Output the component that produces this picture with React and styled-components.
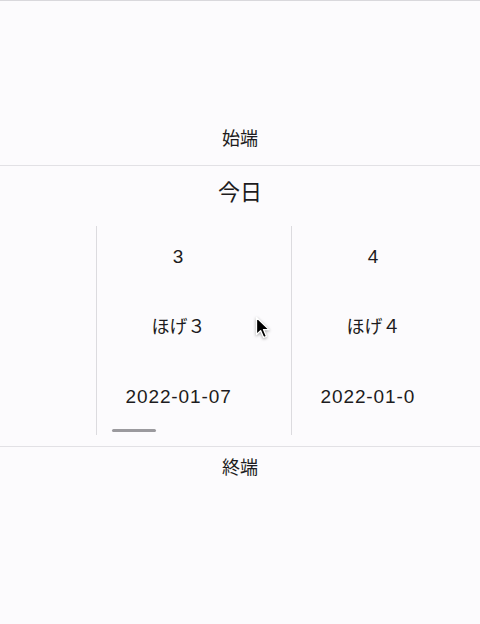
import React from "react";
import styled, { createGlobalStyle } from "styled-components";

const GlobalStyle = createGlobalStyle`
  body {
    margin: 0;
    background: #fcfbfd;
    font-family: "Liberation Sans", "Noto Sans CJK JP", sans-serif;
    color: #1d1b20;
  }
`;

const Page = styled.div`
  position: relative;
  width: 480px;
  height: 624px;
  box-sizing: border-box;
  border-top: 1px solid #d9d8dc;
  background: #fcfbfd;
  display: flex;
  flex-direction: column;
  overflow: hidden;
`;

const EdgeLabel = styled.div`
  box-sizing: border-box;
  display: flex;
  justify-content: center;
  font-size: 18px;
  line-height: 24px;
  ${(p) =>
    p.top
      ? `
    height: 165px;
    align-items: flex-end;
    padding-bottom: 14px;
    border-bottom: 1px solid #e2e1e5;
  `
      : `
    padding-top: 9px;
    border-top: 1px solid #e2e1e5;
  `}
`;

const Title = styled.div`
  margin-top: 12px;
  text-align: center;
  font-size: 22px;
  line-height: 30px;
`;

const Viewport = styled.div`
  position: relative;
  margin: 18px 0 11px 96px;
  width: 321px;
  height: 209px;
  display: flex;
  overflow: hidden;
`;

const Column = styled.div`
  flex: 0 0 195px;
  box-sizing: border-box;
  border-left: 1px solid #dcdbdf;
  padding: 19px 31px 0 0;
  display: flex;
  flex-direction: column;
  align-items: center;
  gap: 46px;
`;

const Cell = styled.div`
  font-size: 19px;
  line-height: 24px;
  letter-spacing: 0.9px;
  white-space: nowrap;
`;

const Label = styled(Cell)`
  font-size: 18px;
  letter-spacing: 0;
`;

const DateCell = styled(Cell)`
  width: 106px;
  overflow: hidden;
`;

const Thumb = styled.div`
  position: absolute;
  left: 16px;
  bottom: 3px;
  width: 44px;
  height: 3px;
  border-radius: 2px;
  background: #9b9a9e;
`;

const Cursor = styled.svg`
  position: absolute;
  left: 255px;
  top: 315px;
  width: 16px;
  height: 24px;
  filter: drop-shadow(0 1px 1.5px rgba(0, 0, 0, 0.35));
`;

const items = [
  { id: "3", name: "ほげ３", date: "2022-01-07" },
  { id: "4", name: "ほげ４", date: "2022-01-0" },
];

export default function App() {
  return (
    <>
      <GlobalStyle />
      <Page>
        <EdgeLabel top>始端</EdgeLabel>
        <Title>今日</Title>
        <Viewport>
          {items.map((item) => (
            <Column key={item.id}>
              <Cell>{item.id}</Cell>
              <Label>{item.name}</Label>
              <DateCell>{item.date}</DateCell>
            </Column>
          ))}
          <Thumb />
        </Viewport>
        <EdgeLabel>終端</EdgeLabel>
        {/* mouse pointer */}
        <Cursor viewBox="0 0 16 24">
          <path
            d="M1.5 1.5 L1.5 18.5 L5.6 14.6 L8.6 21.5 L11.4 20.3 L8.5 13.6 L14 13.6 Z"
            fill="#000"
            stroke="#fff"
            strokeWidth="1.3"
            strokeLinejoin="round"
          />
        </Cursor>
      </Page>
    </>
  );
}
